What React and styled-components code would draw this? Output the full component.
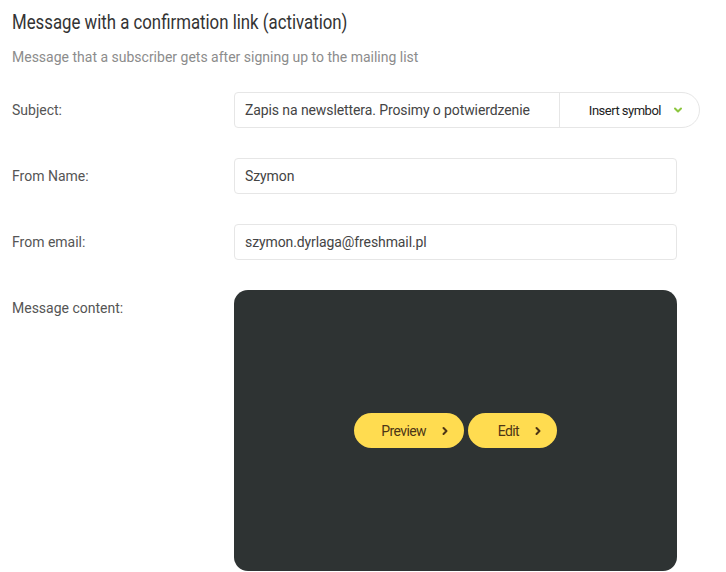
import React from 'react'
import styled, { createGlobalStyle } from 'styled-components'

const GlobalStyle = createGlobalStyle`
  body {
    margin: 0;
    background: #fff;
    font-family: Roboto, "Liberation Sans", sans-serif;
  }
`

const Page = styled.div`
  padding: 8px 12px 0;
  width: 726px;
  box-sizing: border-box;
`

// the original uses a narrow rounded face; squeeze Roboto to the same width
const Title = styled.h1`
  margin: 0;
  display: inline-block;
  font-weight: 400;
  font-size: 21px;
  line-height: 28px;
  color: #333;
  transform: scaleX(0.8);
  transform-origin: left center;
  white-space: nowrap;
`

const Subtitle = styled.p`
  margin: 12px 0 0;
  font-size: 14px;
  line-height: 18px;
  color: #8c8c8c;
`

const Form = styled.div`
  margin-top: 26px;
  display: flex;
  flex-direction: column;
  gap: 30px;
`

const Row = styled.div`
  display: grid;
  grid-template-columns: 222px 1fr;
  align-items: start;
`

const Label = styled.label`
  font-size: 14px;
  line-height: 36px;
  color: #555;
`

const Field = styled.div`
  width: ${p => p.$wide ? '466px' : '443px'};
  height: 36px;
  box-sizing: border-box;
  border: 1px solid #e6e6e6;
  border-radius: ${p => p.$wide ? '4px 18px 18px 4px' : '4px'};
  display: flex;
  align-items: center;
  font-size: 14px;
  color: #444;
`

const Value = styled.span`
  flex: 1;
  padding: 0 10px;
  white-space: nowrap;
  overflow: hidden;
  letter-spacing: -0.1px;
`

const SymbolButton = styled.div`
  width: 140px;
  height: 100%;
  border-left: 1px solid #e6e6e6;
  display: flex;
  align-items: center;
  justify-content: flex-end;
  gap: 12px;
  padding-right: 16px;
  box-sizing: border-box;
  font-size: 13px;
  letter-spacing: -0.5px;
  color: #222;
`

const Editor = styled.div`
  width: 443px;
  height: 281px;
  background: #2e3333;
  border-radius: 14px;
  display: flex;
  align-items: center;
  justify-content: center;
  gap: 4px;
`

const PillButton = styled.button`
  height: 35px;
  width: ${p => p.$w}px;
  border: 0;
  border-radius: 18px;
  background: #ffdc50;
  color: #4d3516;
  display: flex;
  align-items: center;
  justify-content: flex-end;
  gap: 14px;
  padding: 0 14px 0 0;
  font-family: Roboto, sans-serif;
  font-size: 14px;
  letter-spacing: -0.6px;
  cursor: pointer;
`

const Chevron = ({ color, down }) => (
  <svg width="10" height="10" viewBox="0 0 10 10">
    <path
      d={down ? 'M2 3.5 L5 6.5 L8 3.5' : 'M3.5 2 L6.5 5 L3.5 8'}
      fill="none"
      stroke={color}
      strokeWidth="2"
      strokeLinecap="round"
      strokeLinejoin="round"
    />
  </svg>
)

const App = () => (
  <Page>
    <GlobalStyle />
    <Title>Message with a confirmation link (activation)</Title>
    <Subtitle>Message that a subscriber gets after signing up to the mailing list</Subtitle>
    <Form>
      <Row>
        <Label>Subject:</Label>
        <Field $wide>
          <Value>Zapis na newslettera. Prosimy o potwierdzenie</Value>
          <SymbolButton>
            Insert symbol
            <Chevron color="#8cc63f" down />
          </SymbolButton>
        </Field>
      </Row>
      <Row>
        <Label>From Name:</Label>
        <Field>
          <Value>Szymon</Value>
        </Field>
      </Row>
      <Row>
        <Label>From email:</Label>
        <Field>
          <Value>szymon.dyrlaga@freshmail.pl</Value>
        </Field>
      </Row>
      <Row>
        <Label>Message content:</Label>
        <Editor>
          <PillButton $w={110}>
            Preview
            <Chevron color="#4d3516" />
          </PillButton>
          <PillButton $w={89}>
            Edit
            <Chevron color="#4d3516" />
          </PillButton>
        </Editor>
      </Row>
    </Form>
  </Page>
)

export default App
